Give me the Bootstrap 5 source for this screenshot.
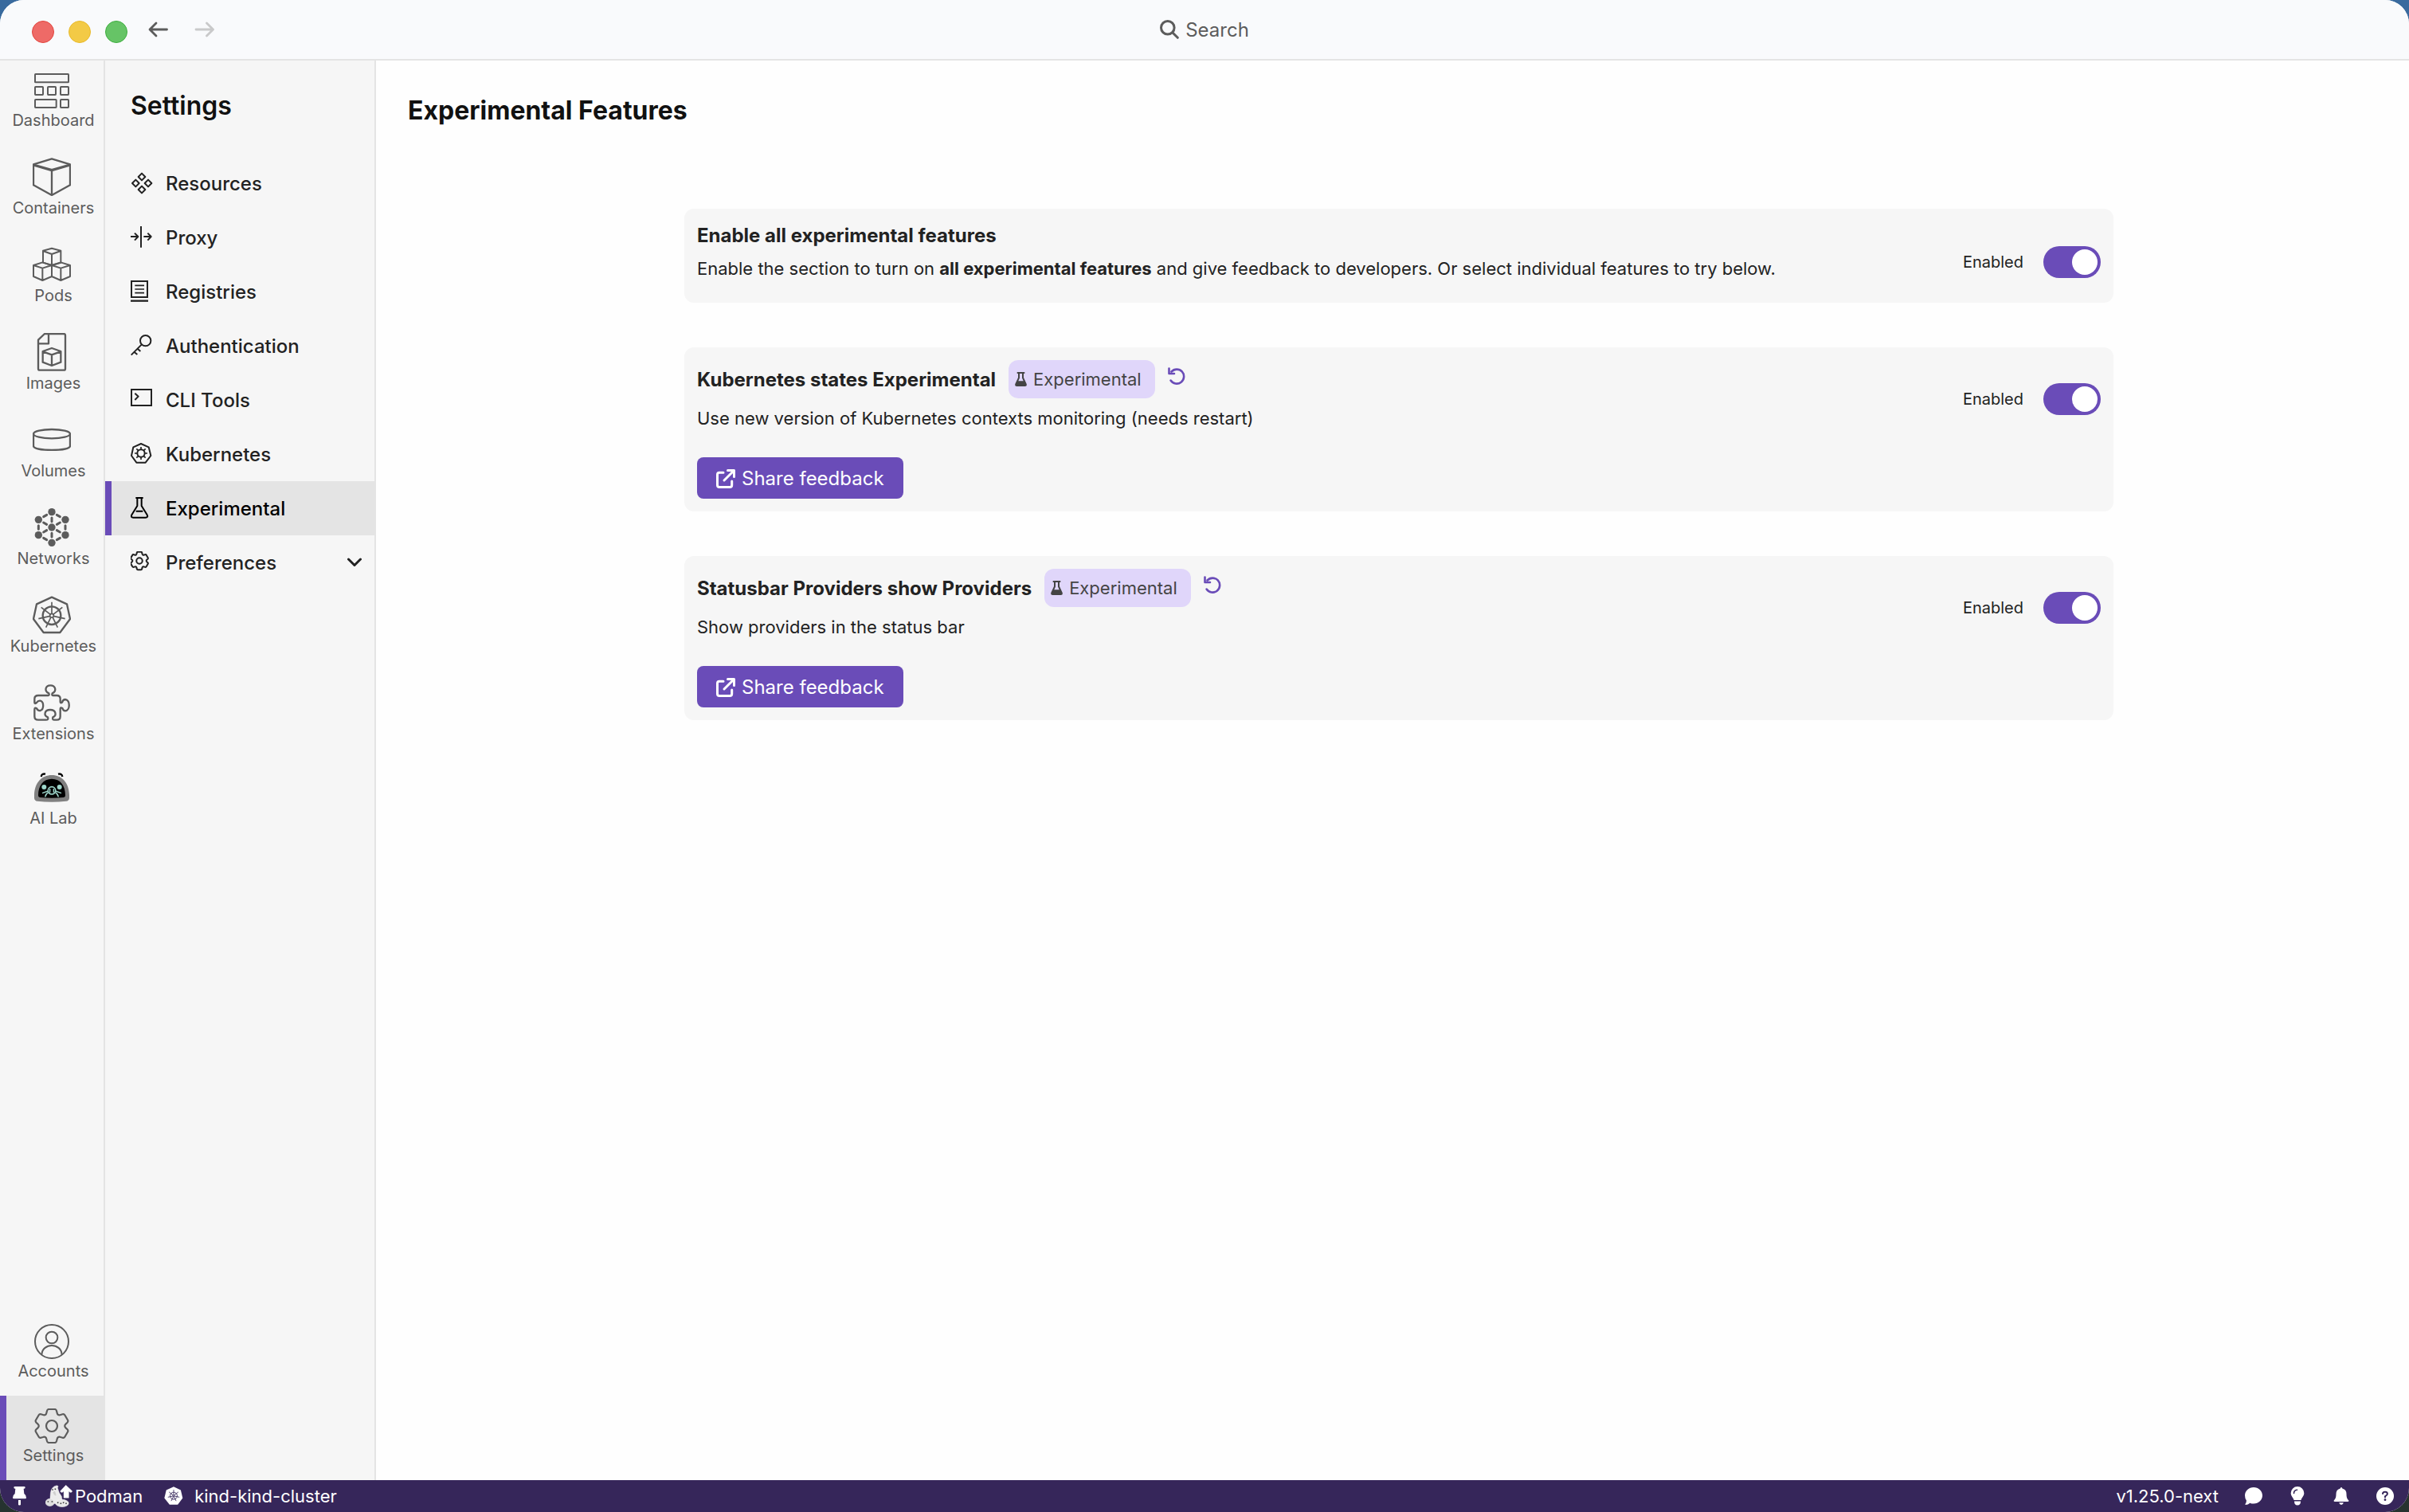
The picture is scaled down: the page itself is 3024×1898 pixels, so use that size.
<!DOCTYPE html>
<html lang="en">
<head>
<meta charset="utf-8">
<meta name="viewport" content="width=device-width, initial-scale=1">
<title>Podman Desktop - Experimental Features</title>
<link rel="stylesheet" href="https://cdn.jsdelivr.net/npm/bootstrap@5.3.0/dist/css/bootstrap.min.css">
<style>
  :root { --accent: #6a4cb8; --line: #e4e4e4; --side: #f6f6f6; --sel: #e4e4e4; --ink: #222; --soft: #5c5c5c; }
  body { font-family: Inter, "Liberation Sans", sans-serif; font-size: 22px; color: var(--ink);
         background: linear-gradient(#396a9e 0 50%, #26332f 50%); }
  svg { display: block; flex: none; fill: none; stroke: currentColor; stroke-linejoin: round; }
  .solid { fill: currentColor; stroke: none; }
  a { color: inherit; text-decoration: none; }
  .app-window { border-radius: 30px; background: #fefefe; }

  .titlebar { height: 76px; background: #f9fafc; border-bottom: 2px solid var(--line); color: var(--soft); padding: 0 40px; }
  .side-slot { flex: 1 1 0; }
  .lights { gap: 18px; margin-right: 26px; }
  .light { width: 28px; height: 28px; border-radius: 50%; border: 1px solid; padding: 0; margin-top: 6px; }
  .light-close { background: #ee6a67; border-color: #e2463f; }
  .light-min { background: #f3ca46; border-color: #e8b92b; }
  .light-max { background: #66c466; border-color: #3fae41; }
  .plain-btn { border: 0; background: none; padding: 0; color: inherit; }
  .history-btn { margin-right: 32px; }
  .history-btn:disabled { color: #c9c9ca; }
  .search-btn { font-size: 24px; line-height: 32px; }
  .search-btn span, .settings-nav a span { padding-top: 2px; }

  .rail { width: 132px; background: var(--side); box-shadow: inset -2px 0 var(--line); color: var(--soft); }
  .rail a { padding: 16px 2px 16px 0; display: flex; flex-direction: column; align-items: center; font-size: 20px; line-height: 30px; }
  .rail a span { padding-left: 4px; }
  .rail a.active { background: var(--sel); box-shadow: inset 8px 0 var(--accent); }

  .settings-nav { width: 340px; background: var(--side); box-shadow: inset -2px 0 var(--line); }
  .settings-nav h2 { font-size: 32px; line-height: 40px; font-weight: 600; color: #111; margin: 0; padding: 37px 32px 43px; }
  .settings-nav a { height: 68px; padding: 0 18px 0 32px; font-size: 24px; font-weight: 500; display: flex; align-items: center; gap: 16px; }
  .settings-nav a.active { background: var(--sel); box-shadow: inset 8px 0 var(--accent); color: #000; }

  .page-title { font-size: 32px; line-height: 40px; font-weight: 700; color: #111; margin: 0; padding: 43px 40px 0; }
  .feature-area { padding: 103px 0 0 16px; }
  .feature-list { max-width: 1794px; display: flex; flex-direction: column; gap: 56px; }
  .feature { background: var(--side); border-radius: 12px; padding: 16px; }
  .feature h3 { font-size: 24px; line-height: 32px; font-weight: 700; margin: 0; padding-top: 2px; }
  .feature p { font-size: 22px; line-height: 42px; margin: 4px 0 0; }
  .feature-all { padding-bottom: 22px; }
  .feature p b { font-weight: 700; }
  .tag { height: 48px; padding: 0 17px 0 8px; gap: 8px; border-radius: 12px; background: #e0d6fa; color: #444; font-size: 22px; }
  .reset { color: var(--accent); margin-bottom: 8px; }
  .feedback-btn { margin-top: 28px; height: 52px; padding: 2px 24px 0; gap: 8px; border: 0; border-radius: 8px; background: var(--accent); color: #fff; font-size: 24px; font-weight: 400; line-height: 32px; }
  .feedback-btn:hover { background: #5b3fa8; color: #fff; }
  .toggle-box { margin-top: 29px; gap: 25px; height: 40px; }
  .feature-all .toggle-box { margin-top: 31px; }
  .toggle-box label { font-size: 20px; }
  .toggle-box .form-check-input { width: 72px; height: 40px; margin: 0; float: none; border: 0; background-color: var(--accent);
    background-size: 72px 40px; background-image: url("data:image/svg+xml,%3Csvg xmlns='http://www.w3.org/2000/svg' viewBox='0 0 72 40'%3E%3Ccircle cx='52' cy='20' r='16' fill='white'/%3E%3C/svg%3E"); }
  .form-switch { padding: 0; min-height: 0; }
  .toggle-box .form-check-input:not(:checked) { background-color: #999; transform: rotate(180deg); }

  .statusbar { height: 40px; background: #36265a; color: #fff; padding: 0 19px 0 16px; font-size: 22px; }
  .statusbar .tray { gap: 33px; }
  .provider { margin-left: 24px; gap: 3px; }
  .context { margin-left: 27px; gap: 14px; }
</style>
</head>
<body>
<svg width="0" height="0" class="position-absolute" aria-hidden="true">
  <symbol id="gear" viewBox="-22 -22 44 44" overflow="visible">
    <path d="M-3.8-21H3.8Q5.4-21 6-19L6.6-16.6Q7.4-12.8 11.1-14L13.5-14.7Q15.5-15.2 16.3-13.8L20.1-7.2Q20.9-5.8 19.5-4.3L17.7-2.6Q14.8 0 17.7 2.6L19.5 4.3Q20.9 5.8 20.1 7.2L16.3 13.8Q15.5 15.2 13.5 14.7L11.1 14Q7.4 12.8 6.6 16.6L6 19Q5.4 21 3.8 21H-3.8Q-5.4 21-6 19L-6.6 16.6Q-7.4 12.8-11.1 14L-13.5 14.7Q-15.5 15.2-16.3 13.8L-20.1 7.2Q-20.9 5.8-19.5 4.3L-17.7 2.6Q-14.8 0-17.7-2.6L-19.5-4.3Q-20.9-5.8-20.1-7.2L-16.3-13.8Q-15.5-15.2-13.5-14.7L-11.1-14Q-7.4-12.8-6.6-16.6L-6-19Q-5.4-21-3.8-21Z"/>
    <circle r="7"/>
  </symbol>
  <symbol id="flask-solid" viewBox="0 0 15 18">
    <path class="solid" d="M3.500 0H11.500A1 1 0 0 1 11.500 2H11V7L14.600 14.800Q15.600 18 12.800 18H2.200Q-.6 18 .4 14.800L4 7V2H3.500A1 1 0 0 1 3.500 0ZM6 2V7.500L4.300 11.300H10.700L9 7.500V2Z" fill-rule="evenodd"/>
  </symbol>
  <symbol id="undo" viewBox="0 0 22 22">
    <path d="M4.500 5.500A9 9 0 1 1 3.600 16.500" stroke-width="2.600" stroke-linecap="round"/>
    <path d="M1.500 1.500V8H8" stroke-width="2.600" stroke-linecap="round"/>
  </symbol>
  <symbol id="share" viewBox="0 0 24 24">
    <path d="M9 4.300H4Q1.500 4.300 1.500 6.800V20Q1.500 22.500 4 22.500H17.200Q19.700 22.500 19.700 20V15" stroke-width="3" stroke-linecap="round"/>
    <path d="M10 14L21 3M14.500 1.500H22.500V9.500" stroke-width="3" stroke-linecap="round"/>
  </symbol>
</svg>

<div class="app-window d-flex flex-column vh-100 overflow-hidden">
  <header class="titlebar d-flex align-items-center flex-shrink-0">
    <div class="side-slot d-flex align-items-center">
      <div class="lights d-flex">
        <button class="light light-close" aria-label="Close"></button>
        <button class="light light-min" aria-label="Minimize"></button>
        <button class="light light-max" aria-label="Maximize"></button>
      </div>
      <button class="plain-btn history-btn" aria-label="Back"><svg width="26" height="20" viewBox="0 0 26 20" stroke-width="2.800" stroke-linecap="round"><path d="M23.500 10H2.500M10 2L2 10L10 18"/></svg></button>
      <button class="plain-btn history-btn" aria-label="Forward" disabled><svg width="26" height="20" viewBox="0 0 26 20" stroke-width="2.800" stroke-linecap="round"><path d="M2 10H23M15.500 2L23.500 10L15.500 18"/></svg></button>
    </div>
    <button class="plain-btn search-btn d-flex align-items-center gap-2"><svg width="24" height="24" viewBox="0 0 24 24" stroke-width="3" stroke-linecap="round"><circle cx="9.800" cy="9.800" r="8.300"/><path d="M16 16L22.300 22.300"/></svg><span>Search</span></button>
    <div class="side-slot"></div>
  </header>

  <div class="d-flex flex-grow-1" style="min-height:0">
    <nav class="rail d-flex flex-column flex-shrink-0" aria-label="Main">
      <a href="#"><svg width="44" height="44" viewBox="129 276 132 132" stroke-width="6"><rect x="132" y="279" width="126" height="31" rx="2"/><rect x="132" y="327" width="30" height="30" rx="2"/><rect x="180" y="327" width="30" height="30" rx="2"/><rect x="228" y="327" width="30" height="30" rx="2"/><rect x="132" y="375" width="80" height="30" rx="2"/><rect x="228" y="375" width="30" height="30" rx="2"/></svg><span>Dashboard</span></a>
      <a href="#"><svg width="48" height="48" viewBox="123 594 144 144" stroke-width="7"><path d="M195 598L264 619V697L195 735L126 697V619Z"/><path d="M126 621L195 641L264 621" stroke-width="10"/><path d="M195 641V735"/></svg><span>Containers</span></a>
      <a href="#"><svg width="48" height="48" viewBox="123 924 144 144" stroke-width="6"><path d="M195 935L229 944V989L195 999L162 989V944ZM162 945L195 957L229 945M195 957V999"/><path d="M160 988L195 999V1041L160 1056L126 1041V999ZM126 999L160 1010L195 999M160 1010V1056"/><path d="M229 988L264 999V1041L229 1056L195 1041V999ZM195 999L229 1010L264 999M229 1010V1056"/></svg><span>Pods</span></a>
      <a href="#"><svg width="48" height="48" viewBox="123 84 144 144" stroke-width="7"><path d="M168 87H240Q246 87 246 93V218Q246 224 240 224H150Q144 224 144 218V110Z"/><path d="M183 88V124H145"/><path d="M195 141L229 153V194L195 207L161 194V153ZM161 154L195 166L229 154M195 166V207"/></svg><span>Images</span></a>
      <a href="#"><svg width="48" height="48" viewBox="123 414 144 144" stroke-width="7"><ellipse cx="195" cy="464" rx="69" ry="17"/><path d="M126 464V509C126 530 264 530 264 509V464"/></svg><span>Volumes</span></a>
      <a href="#"><svg width="48" height="48" viewBox="123 744 144 144" stroke-width="9"><g class="solid"><circle cx="195" cy="758" r="14"/><circle cx="195" cy="816" r="14"/><circle cx="195" cy="874" r="14"/><circle cx="145" cy="787" r="14"/><circle cx="246" cy="787" r="14"/><circle cx="145" cy="845" r="14"/><circle cx="246" cy="845" r="14"/></g><path stroke-linecap="round" d="M164 776L176 769M226 776L214 769M164 856L176 863M226 856L214 863M145 809V823M246 809V823M195 780V794M195 838V852M164 798L176 805M226 798L214 805M164 834L176 827M226 834L214 827"/></svg><span>Networks</span></a>
      <a href="#"><svg width="48" height="48" viewBox="123 54 144 144" stroke-width="7"><path d="M195 59L252 85L264 141L226 192H164L126 141L138 85Z"/><circle cx="195" cy="128" r="34"/><circle cx="195" cy="128" r="7" stroke-width="5"/><path stroke-width="5" d="M195 121V77M200 124L235 97M201 130L245 140M198 134L217 173M192 134L173 173M189 130L145 140M190 124L155 97"/></svg><span>Kubernetes</span></a>
      <a href="#"><svg width="48" height="48" viewBox="123 384 144 144" stroke-width="7"><path d="M130 456V442Q130 429 144 429H181Q187 429 184 421C165 412 171 391 190 391C209 391 215 412 197 421Q194 429 199 429H214Q227 429 227 442V452Q227 460 234 455C236 446 241 444 246 444C265 446 265 485 246 487C241 487 237 484 235 477Q227 472 227 480V508Q227 521 214 521H205Q196 521 199 511C214 505 212 483 189 483C166 483 164 505 180 511Q184 521 173 521H144Q130 521 130 508V482Q130 473 138 478C141 485 146 487 152 486C166 481 166 453 152 449C146 448 141 451 138 456Q130 462 130 456Z"/></svg><span>Extensions</span></a>
      <a href="#"><svg width="44" height="44" viewBox="129 714 132 132"><path d="M155 735Q157 722 171 725M235 735Q233 722 219 725" stroke="#000" stroke-width="7"/><path d="M129 815C127 760 155 729 195 729C235 729 263 760 261 815Q260 826 249 827Q195 833 141 827Q130 826 129 815Z" fill="#808080" stroke="none"/><path d="M144 805C144 768 163 743 195 743C227 743 246 768 246 805Q246 813 238 813Q195 818 152 813Q144 813 144 805Z" fill="#000" stroke="none"/><g stroke="#9ed6cb" stroke-width="4"><circle cx="166" cy="774" r="9" fill="#9ed6cb" stroke="none"/><circle cx="224" cy="774" r="9" fill="#9ed6cb" stroke="none"/><circle cx="195" cy="787" r="14" stroke-width="5"/><path d="M188 780V794M202 780V794M181 789L159 797M182 794Q172 800 170 811M209 789L231 797M208 794Q218 800 220 811"/></g></svg><span>AI Lab</span></a>
      <a href="#" class="mt-auto"><svg width="44" height="44" viewBox="129 66 132 132" stroke-width="6"><circle cx="195" cy="132" r="63"/><circle cx="195" cy="117" r="22"/><path d="M157 181C160 136 230 136 233 181"/></svg><span>Accounts</span></a>
      <a href="#" class="active" aria-current="page"><svg width="44" height="44" stroke-width="2.200"><use href="#gear"/></svg><span>Settings</span></a>
    </nav>

    <nav class="settings-nav flex-shrink-0" aria-label="Settings">
      <h2>Settings</h2>
      <a href="#"><svg width="28" height="28" viewBox="492 648 84 84" stroke-width="6" stroke-linejoin="miter"><path d="M534 653L547 666L534 679L521 666ZM511 677L524 690L511 703L498 690ZM558 677L571 690L558 703L545 690ZM534 701L547 714L534 727L521 714Z"/></svg><span>Resources</span></a>
      <a href="#"><svg width="28" height="28" viewBox="492 852 84 84" stroke-width="6"><path d="M531 852V932M492 891H519M507 878L520 891L507 905M541 891H569M556 878L569 891L556 905"/></svg><span>Proxy</span></a>
      <a href="#"><svg width="28" height="28" viewBox="492 1056 84 84" stroke-width="6"><path d="M495 1059H555V1119H495Z" stroke-linejoin="miter"/><path d="M508 1075H543M508 1089H543M508 1103H543" stroke-width="5"/><path d="M492 1133H558" stroke-width="7"/></svg><span>Registries</span></a>
      <a href="#"><svg width="28" height="28" viewBox="492 90 84 84" stroke-width="6"><circle cx="548" cy="113" r="20"/><path d="M533 128L494 167M505 155L517 165M518 143L529 153"/></svg><span>Authentication</span></a>
      <a href="#"><svg width="28" height="28" viewBox="492 294 84 84" stroke-width="6"><path d="M495 297H570V357H495Z" stroke-linejoin="miter"/><path d="M508 311L521 323L508 336"/></svg><span>CLI Tools</span></a>
      <a href="#"><svg width="28" height="28" viewBox="492 498 84 84" stroke-width="6"><path d="M531 501L560 514L568 546L548 572H514L495 546L502 514Z"/><circle cx="531" cy="537" r="14"/><path stroke-width="5" d="M531 523V513M531 551V561M517 537H507M545 537H555M521 527L514 520M541 527L548 520M521 547L514 554M541 547L548 554"/></svg><span>Kubernetes</span></a>
      <a href="#" class="active" aria-current="page"><svg width="28" height="28" viewBox="492 702 84 84" stroke-width="6"><path d="M511 705H539M517 705V735L496 769Q491 779 502 779H548Q559 779 554 769L533 735V705M512 755H538"/></svg><span>Experimental</span></a>
      <a href="#"><svg width="28" height="28" viewBox="492 906 84 84"><g transform="translate(525 942) scale(1.600)" stroke-width="3.800"><use href="#gear" x="-22" y="-22" width="44" height="44"/></g></svg><span>Preferences</span><svg class="ms-auto" width="18" height="12" viewBox="0 0 18 12" stroke-width="3" stroke-linecap="round"><path d="M1.500 2L9 9.500L16.500 2"/></svg></a>
    </nav>

    <main class="flex-grow-1 overflow-auto">
      <h1 class="page-title">Experimental Features</h1>
      <div class="feature-area">
        <div class="feature-list mx-auto">
          <section class="feature feature-all d-flex align-items-start">
            <div class="flex-grow-1">
              <h3>Enable all experimental features</h3>
              <p>Enable the section to turn on <b>all experimental features</b> and give feedback to developers. Or select individual features to try below.</p>
            </div>
            <div class="toggle-box form-switch d-flex align-items-center"><label for="sw-all">Enabled</label><input class="form-check-input" type="checkbox" role="switch" id="sw-all" checked></div>
          </section>

          <section class="feature d-flex align-items-start">
            <div class="flex-grow-1">
              <div class="d-flex align-items-center gap-3">
                <h3>Kubernetes states Experimental</h3>
                <span class="tag d-flex align-items-center"><svg width="15" height="18"><use href="#flask-solid"/></svg>Experimental</span>
                <button class="plain-btn reset" aria-label="Reset to default value"><svg width="22" height="22"><use href="#undo"/></svg></button>
              </div>
              <p>Use new version of Kubernetes contexts monitoring (needs restart)</p>
              <button class="btn feedback-btn d-flex align-items-center"><svg width="24" height="24"><use href="#share"/></svg>Share feedback</button>
            </div>
            <div class="toggle-box form-switch d-flex align-items-center"><label for="sw-kube">Enabled</label><input class="form-check-input" type="checkbox" role="switch" id="sw-kube" checked></div>
          </section>

          <section class="feature d-flex align-items-start">
            <div class="flex-grow-1">
              <div class="d-flex align-items-center gap-3">
                <h3>Statusbar Providers show Providers</h3>
                <span class="tag d-flex align-items-center"><svg width="15" height="18"><use href="#flask-solid"/></svg>Experimental</span>
                <button class="plain-btn reset" aria-label="Reset to default value"><svg width="22" height="22"><use href="#undo"/></svg></button>
              </div>
              <p>Show providers in the status bar</p>
              <button class="btn feedback-btn d-flex align-items-center"><svg width="24" height="24"><use href="#share"/></svg>Share feedback</button>
            </div>
            <div class="toggle-box form-switch d-flex align-items-center"><label for="sw-status">Enabled</label><input class="form-check-input" type="checkbox" role="switch" id="sw-status" checked></div>
          </section>
        </div>
      </div>
    </main>
  </div>

  <footer class="statusbar d-flex align-items-center flex-shrink-0">
    <button class="plain-btn" aria-label="Pin"><svg width="17" height="24" viewBox="48 680 51 72"><path class="solid" d="M56 680H91Q95 680 95 684T91 688H89L91 707Q99 712 99 723Q99 726 95 726H52Q48 726 48 723Q48 712 56 707L58 688H56Q52 688 52 684T56 680ZM69 731H78V748Q73 753 69 748Z"/></svg></button>
    <a href="#" class="provider d-flex align-items-center"><svg width="34" height="28" viewBox="171 669 102 84" stroke="none"><path fill="#ececec" d="M190 700Q193 674 214 671Q222 672 217 680Q222 700 232 712L236 738Q210 748 188 730Z"/><path fill="#cfcfcf" d="M205 690Q213 698 212 712Q202 708 198 698Z"/><ellipse cx="188" cy="735" rx="17" ry="14" fill="#dedede"/><ellipse cx="234" cy="738" rx="25" ry="14" fill="#e8e8e8"/><g fill="#222"><circle cx="198" cy="687" r="3"/><circle cx="208" cy="685" r="3"/><circle cx="181" cy="732" r="3"/><circle cx="196" cy="732" r="3"/><circle cx="218" cy="736" r="3"/><circle cx="229" cy="739" r="3"/><circle cx="239" cy="736" r="3"/><circle cx="249" cy="739" r="3"/></g><path fill="#fff" d="M248 670L272 692Q272 698 264 697L259 693V718H240V693L235 697Q227 698 227 692Z"/></svg>Podman</a>
    <a href="#" class="context d-flex align-items-center"><svg width="24" height="24" viewBox="618 675 70 70"><path d="M653 676L679 688L686 717L668 741H638L619 717L626 688Z" fill="#fff" stroke="none"/><g stroke="#36265a" stroke-width="2.500"><circle cx="653" cy="709" r="13"/><circle cx="653" cy="709" r="3"/><path d="M653 706V687M655 707L670 695M656 710L674 714M654 712L662 728M652 712L644 728M650 710L632 714M651 707L636 695"/></g></svg><span>kind-kind-cluster</span></a>
    <div class="tray d-flex align-items-center ms-auto">
      <span>v1.25.0-next</span>
      <button class="plain-btn" aria-label="Share feedback"><svg width="22" height="22" viewBox="0 0 22 22"><path class="solid" d="M11 0C17 0 22 4.600 22 10.300S17 20.600 11 20.600Q8.500 20.600 6.300 19.700Q4 22 .8 22Q0 21.600 .6 20.800Q2 19 1.900 16.500Q0 14 0 10.300C0 4.600 5 0 11 0Z"/></svg></button>
      <button class="plain-btn" aria-label="Tips"><svg width="22" height="24" viewBox="0 0 22 24"><path class="solid" d="M11 0A8.300 8.300 0 0 1 19.300 8.300C19.300 12 16.500 13.500 15.500 17H6.500C5.500 13.500 2.700 12 2.700 8.300A8.300 8.300 0 0 1 11 0ZM7 18.500H15Q15 23.500 11 23.500T7 18.500Z"/><path d="M6.500 8.500Q6.500 4.500 10.500 4.200" stroke="#36265a" stroke-width="1.600" stroke-linecap="round"/></svg></button>
      <button class="plain-btn" aria-label="Notifications"><svg width="22" height="22" viewBox="0 0 22 22"><path class="solid" d="M11 0Q12.300 0 12.300 1.500Q17.500 2.700 17.500 8.500C17.500 13 18.500 14.500 20.200 16.300Q21 18 19.300 18H2.700Q1 18 1.800 16.300C3.500 14.500 4.500 13 4.500 8.500Q4.500 2.700 9.700 1.500Q9.700 0 11 0ZM8.200 19.300H13.800Q13.300 22 11 22T8.200 19.300Z"/></svg></button>
      <button class="plain-btn" aria-label="Help"><svg width="22" height="22" viewBox="0 0 22 22"><circle class="solid" cx="11" cy="11" r="11"/><path d="M8 8Q8.300 5.800 11 5.800T13.900 8.200Q13.900 9.700 11 11.300V12.500" stroke="#36265a" stroke-width="2" stroke-linecap="round"/><circle cx="11" cy="15.700" r="1.400" fill="#36265a" stroke="none"/></svg></button>
    </div>
  </footer>
</div>
<script src="https://cdn.jsdelivr.net/npm/bootstrap@5.3.0/dist/js/bootstrap.bundle.min.js"></script>
</body>
</html>
